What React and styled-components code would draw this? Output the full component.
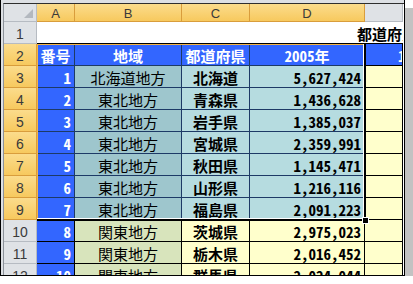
import React from 'react';
import styled, { createGlobalStyle } from 'styled-components';

const GlobalStyle = createGlobalStyle`
  html, body { margin: 0; padding: 0; background: #ffffff; }
`;

const CJK = `"Noto Sans CJK JP", "Noto Sans CJK SC", sans-serif`;
const UI = `"Liberation Sans", Arial, sans-serif`;

const Window = styled.div`
  position: relative;
  box-sizing: border-box;
  width: 405px;
  height: 276px;
  border: 1px solid #000;
  border-top: none;
  padding: 3px 0 0 2px;
  background: #dde0e4;
  box-shadow: 8px 8px 0 #c2c2c2;
  overflow: hidden;
`;

const Sheet = styled.div`
  position: relative;
  box-sizing: border-box;
  width: 401px;
  height: 273px;
  overflow: hidden;
  border-top: 1px solid #2e2e2e;
  border-left: 1px solid #8c929a;
  background: #fff;
  display: grid;
  grid-template-columns: 33px 38px 107px 68px 115px 38px;
  grid-template-rows: 18px;
  grid-auto-rows: 22px;
  align-content: start;
`;

const Head = styled.div`
  box-sizing: border-box;
  display: flex;
  align-items: flex-end;
  justify-content: center;
  padding-bottom: ${p => (p.$row ? 2 : 1)}px;
  font-family: ${UI};
  font-size: ${p => (p.$row ? 14 : 13)}px;
  line-height: 1;
  color: #3a3a3a;
  background: ${p => (p.$on ? 'linear-gradient(#fbdc8c, #f7c95e)' : '#dfe2e6')};
  border-right: 1px solid ${p => (p.$on ? '#d99d3c' : '#b6bbc2')};
  border-bottom: 1px solid ${p => (p.$on ? '#d99d3c' : '#b6bbc2')};
  overflow: hidden;
`;

const Corner = styled(Head)`
  justify-content: flex-end;
  padding: 0 3px 3px 0;
`;

const Cell = styled.div`
  box-sizing: border-box;
  display: flex;
  align-items: center;
  justify-content: ${p => (p.$align === 'right' ? 'flex-end' : p.$align === 'left' ? 'flex-start' : 'center')};
  padding: 2px 3px 0 ${p => p.$indent || 3}px;
  font-family: ${CJK};
  font-size: 15px;
  line-height: 1;
  font-weight: ${p => (p.$bold ? 700 : 400)};
  font-feature-settings: "hwid" 1;
  color: ${p => p.$fg || '#000'};
  background: ${p => p.$bg};
  border-right: 1px solid ${p => p.$line};
  border-bottom: 1px solid ${p => p.$line};
  white-space: nowrap;
  overflow: hidden;
`;

const TitleCell = styled.div`
  grid-column: 2 / -1;
  box-sizing: border-box;
  display: flex;
  align-items: center;
  padding: 2px 0 0 320px;
  font-family: ${CJK};
  font-size: 15px;
  font-weight: 700;
  line-height: 1;
  color: #000;
  background: #fff;
  border-bottom: 1px solid #000;
  white-space: nowrap;
  overflow: hidden;
`;

const Selection = styled.div`
  position: absolute;
  left: 33px;
  top: 40px;
  width: 329px;
  height: 177px;
  box-sizing: border-box;
  border-right: 2px solid #000;
  border-bottom: 2px solid #000;
  box-shadow: inset -1px -1px 0 #fff, inset 1px 1px 0 #f4b445;
  pointer-events: none;
`;

const FillHandle = styled.div`
  position: absolute;
  left: 358px;
  top: 213px;
  width: 7px;
  height: 7px;
  box-sizing: border-box;
  background: #000;
  border: 1px solid #fff;
`;

const BLUE = '#3366ff';
const NAVY = '#1d3a66';

const data = [
  ['1', '北海道地方', '北海道', '5,627,424'],
  ['2', '東北地方', '青森県', '1,436,628'],
  ['3', '東北地方', '岩手県', '1,385,037'],
  ['4', '東北地方', '宮城県', '2,359,991'],
  ['5', '東北地方', '秋田県', '1,145,471'],
  ['6', '東北地方', '山形県', '1,216,116'],
  ['7', '東北地方', '福島県', '2,091,223'],
  ['8', '関東地方', '茨城県', '2,975,023'],
  ['9', '関東地方', '栃木県', '2,016,452'],
  ['10', '関東地方', '群馬県', '2,024,044'],
];

export default function App() {
  return (
    <>
      <GlobalStyle />
      <Window>
        <Sheet>
          <Corner>
            <svg width="9" height="9" viewBox="0 0 9 9">
              <polygon points="9,0 9,9 0,9" fill="#b3b8bf" />
            </svg>
          </Corner>
          {['A', 'B', 'C', 'D'].map(c => (
            <Head key={c} $on>{c}</Head>
          ))}
          <Head />

          <Head $row>1</Head>
          <TitleCell>都道府県</TitleCell>

          <Head $row $on>2</Head>
          <Cell $bold $fg="#fff" $bg={BLUE} $line={NAVY}>番号</Cell>
          <Cell $bold $fg="#fff" $bg={BLUE} $line={NAVY}>地域</Cell>
          <Cell $bold $fg="#fff" $bg={BLUE} $line={NAVY}>都道府県</Cell>
          <Cell $bold $fg="#fff" $bg={BLUE} $line={NAVY}>2005年</Cell>
          <Cell $bold $align="left" $indent={33} $fg="#fff" $bg={BLUE} $line="#000">1</Cell>

          {data.map(([no, region, pref, pop], i) => {
            const north = i < 7;
            const line = north ? NAVY : '#000';
            return (
              <React.Fragment key={no}>
                <Head $row $on={north}>{i + 3}</Head>
                <Cell $align="right" $bold $fg="#fff" $bg={BLUE} $line={line}>{no}</Cell>
                <Cell $bg={north ? '#9ec6cd' : '#d8e4bc'} $line={line}>{region}</Cell>
                <Cell $bold $bg={north ? '#b6dce0' : '#ffffcc'} $line={line}>{pref}</Cell>
                <Cell $align="right" $bold $bg={north ? '#b6dce0' : '#ffffcc'} $line={line}>{pop}</Cell>
                <Cell $bg="#ffffcc" $line="#000" />
              </React.Fragment>
            );
          })}

          <Selection />
          <FillHandle />
        </Sheet>
      </Window>
    </>
  );
}
